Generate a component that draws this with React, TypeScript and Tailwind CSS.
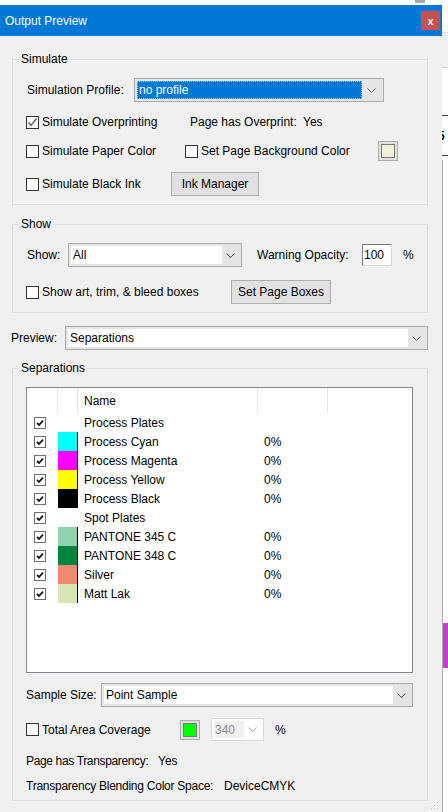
import React from "react";

const font = { fontFamily: '"Liberation Sans", Arial, sans-serif' };

const Chevron = ({ color = "#606060" }: { color?: string }) => (
  <svg width="9" height="5" viewBox="0 0 9 5">
    <path d="M0.5 0.5 L4.5 4.5 L8.5 0.5" fill="none" stroke={color} strokeWidth="1" />
  </svg>
);

const CheckBox = ({ checked }: { checked?: boolean }) => (
  <span className="flex h-[13px] w-[13px] shrink-0 items-center justify-center border border-[#333333] bg-white">
    {checked && (
      <svg width="11" height="11" viewBox="0 0 11 11">
        <path d="M1.5 5.5 L4 8.5 L9.5 1.5" fill="none" stroke="#5a5a5a" strokeWidth="1.3" />
      </svg>
    )}
  </span>
);

const ListCheck = () => (
  <span className="flex h-[12px] w-[12px] items-center justify-center border border-[#6e6e6e] bg-white">
    <svg width="10" height="10" viewBox="0 0 10 10">
      <path d="M2 4.8 L4 7 L8 2.6" fill="none" stroke="#111" strokeWidth="1.8" />
    </svg>
  </span>
);

const Labeled = ({ checked, text, width }: { checked?: boolean; text: string; width: string }) => (
  <div className={`flex items-center gap-[3px] ${width}`}>
    <CheckBox checked={checked} />
    <span>{text}</span>
  </div>
);

const Combo = ({ text, width }: { text: string; width: string }) => (
  <div className={`flex h-[24px] ${width} border border-[#acacac] bg-[#e5e5e5] p-[2px]`}>
    <div className="flex flex-1 items-center bg-white pl-[2px]">{text}</div>
    <div className="flex w-[17px] items-center justify-center">
      <Chevron />
    </div>
  </div>
);

const Button = ({ text, width }: { text: string; width: string }) => (
  <div className={`flex h-[24px] ${width} items-center justify-center border border-[#adadad] bg-[#e1e1e1]`}>
    {text}
  </div>
);

const Swatch = ({ color }: { color: string }) => (
  <div className="flex h-[20px] w-[20px] items-center justify-center border border-[#acacac] bg-[#e1e1e1]">
    <div className="h-[14px] w-[14px] border border-[#7a7a7a]" style={{ background: color }} />
  </div>
);

const rows = [
  { name: "Process Plates", color: "", pct: "" },
  { name: "Process Cyan", color: "bg-[#00ffff]", pct: "0%" },
  { name: "Process Magenta", color: "bg-[#ff00ff]", pct: "0%" },
  { name: "Process Yellow", color: "bg-[#ffff00]", pct: "0%" },
  { name: "Process Black", color: "bg-[#000000]", pct: "0%" },
  { name: "Spot Plates", color: "", pct: "" },
  { name: "PANTONE 345 C", color: "bg-[#8dd4ad]", pct: "0%" },
  { name: "PANTONE 348 C", color: "bg-[#00843f]", pct: "0%" },
  { name: "Silver", color: "bg-[#f08a6e]", pct: "0%" },
  { name: "Matt Lak", color: "bg-[#dbe5b3]", pct: "0%" },
];

export default function App() {
  return (
    <div className="flex h-[812px] w-[448px] flex-col overflow-hidden bg-white text-[12px] leading-[14px] text-black" style={font}>
      {/* strip above the dialog */}
      <div className="flex h-[5px] shrink-0">
        <div className="ml-[415px] h-[3px] w-[10px] bg-[#a8a8a8]" />
      </div>
      <div className="flex flex-1">
        {/* dialog */}
        <div className="flex w-[442px] flex-col bg-[#f0f0f0]">
          <div className="flex h-[31px] items-center justify-between bg-[#0078d7] pl-[5px] pr-[2px] text-white">
            <span>Output Preview</span>
            <div className="flex h-[19px] w-[19px] items-center justify-center bg-[#c75050] text-[11px] font-bold">x</div>
          </div>

          <fieldset className="ml-[12px] mt-[16px] w-[416px] border border-[#dcdcdc] pb-[8px]">
            <legend className="ml-[6px] px-[2px]">Simulate</legend>
            <div className="flex flex-col pl-[13px]">
              <div className="mt-[12px] flex items-center">
                <span className="w-[108px] pl-[1px]">Simulation Profile:</span>
                <div className="flex h-[24px] w-[250px] border border-[#acacac] bg-[#e5e5e5] p-[2px]">
                  <div className="flex flex-1 items-center border border-dotted border-[#9cc7ea] bg-[#0078d7] pl-[1px] text-white">
                    no profile
                  </div>
                  <div className="flex w-[19px] items-center justify-center">
                    <Chevron />
                  </div>
                </div>
              </div>
              <div className="mt-[10px] flex h-[20px] items-center">
                <Labeled checked text="Simulate Overprinting" width="w-[164px]" />
                <span className="w-[113px]">Page has Overprint:</span>
                <span>Yes</span>
              </div>
              <div className="mt-[9px] flex h-[20px] items-center">
                <Labeled text="Simulate Paper Color" width="w-[159px]" />
                <Labeled text="Set Page Background Color" width="w-[193px]" />
                <Swatch color="#f1f0d6" />
              </div>
              <div className="mt-[11px] flex items-center">
                <Labeled text="Simulate Black Ink" width="w-[145px]" />
                <Button text="Ink Manager" width="w-[88px]" />
              </div>
            </div>
          </fieldset>

          <fieldset className="ml-[12px] mt-[12px] w-[416px] border border-[#dcdcdc] pb-[8px]">
            <legend className="ml-[6px] px-[2px]">Show</legend>
            <div className="flex flex-col pl-[13px]">
              <div className="mt-[12px] flex items-center">
                <span className="w-[42px] pl-[1px]">Show:</span>
                <Combo text="All" width="w-[174px]" />
                <span className="ml-[15px] w-[105px]">Warning Opacity:</span>
                <div className="flex h-[22px] w-[30px] items-center border border-[#7a7a7a] border-b-[#d9d9d9] border-r-[#d9d9d9] bg-white pl-[1px]">100</div>
                <span className="ml-[11px]">%</span>
              </div>
              <div className="mt-[13px] flex items-center">
                <Labeled text="Show art, trim, & bleed boxes" width="w-[205px]" />
                <Button text="Set Page Boxes" width="w-[100px]" />
              </div>
            </div>
          </fieldset>

          <div className="ml-[11px] mt-[13px] flex items-center">
            <span className="w-[54px]">Preview:</span>
            <Combo text="Separations" width="w-[363px]" />
          </div>

          <fieldset className="ml-[12px] mt-[11px] w-[416px] border border-[#dcdcdc] pb-[7px]">
            <legend className="ml-[6px] px-[2px]">Separations</legend>
            <div className="flex flex-col pl-[13px]">
              <div className="mt-[12px] flex h-[286px] w-[387px] flex-col border border-[#828790] bg-white">
                <div className="flex h-[25px]">
                  <div className="w-[31px] border-r border-[#e5e5e5]" />
                  <div className="w-[20px] border-r border-[#e5e5e5]" />
                  <div className="flex w-[180px] items-center border-r border-[#e5e5e5] pl-[6px]">Name</div>
                  <div className="w-[70px] border-r border-[#e5e5e5]" />
                </div>
                {rows.map((r) => (
                  <div key={r.name} className="flex h-[19px]">
                    <div className="flex w-[31px] items-center pl-[7px]">
                      <ListCheck />
                    </div>
                    <div className="w-[20px]">
                      {r.color && <div className={`h-full w-full border-r border-black ${r.color}`} />}
                    </div>
                    <div className="flex w-[180px] items-center pl-[6px]">{r.name}</div>
                    <div className="flex w-[70px] items-center pl-[6px]">{r.pct}</div>
                  </div>
                ))}
              </div>
              <div className="mt-[10px] flex items-center">
                <span className="w-[75px]">Sample Size:</span>
                <Combo text="Point Sample" width="w-[312px]" />
              </div>
              <div className="mt-[11px] flex h-[23px] items-center">
                <Labeled text="Total Area Coverage" width="w-[154px]" />
                <Swatch color="#00ff00" />
                <div className="ml-[11px] flex h-[23px] w-[53px] border border-[#d9d9d9] bg-white p-[2px]">
                  <div className="flex flex-1 items-center bg-[#f0f0f0] pl-[1px] text-[#8a8a8a]">340</div>
                  <div className="flex w-[17px] items-center justify-center">
                    <Chevron color="#b0b0b0" />
                  </div>
                </div>
                <span className="ml-[11px]">%</span>
              </div>
              <div className="mt-[13px] flex">
                <span className="w-[132px] tracking-[-0.35px]">Page has Transparency:</span>
                <span>Yes</span>
              </div>
              <div className="mt-[11px] flex">
                <span className="w-[198px] tracking-[-0.25px]">Transparency Blending Color Space:</span>
                <span>DeviceCMYK</span>
              </div>
            </div>
          </fieldset>

          <div className="flex flex-1 items-end justify-end pb-[2px] pr-[3px]">
            <svg width="8" height="8" viewBox="0 0 8 8">
              <rect x="6" y="0" width="1" height="1" fill="#c0c0c0" />
              <rect x="3" y="3" width="1" height="1" fill="#c0c0c0" />
              <rect x="6" y="3" width="1" height="1" fill="#c0c0c0" />
              <rect x="0" y="6" width="1" height="1" fill="#c0c0c0" />
              <rect x="3" y="6" width="1" height="1" fill="#c0c0c0" />
              <rect x="6" y="6" width="1" height="1" fill="#c0c0c0" />
            </svg>
          </div>
        </div>

        {/* background window peeking at the right edge */}
        <div className="flex w-[6px] flex-col">
          <div className="h-[27px]" />
          <div className="h-[35px] border-t border-[#e0e0e0] bg-[#f0f0f0]" />
          <div className="h-[48px] border-t border-[#d0d0d0]" />
          <div className="h-[1px] bg-[#3c3c3c]" />
          <div className="flex h-[39px] items-center overflow-hidden">
            <span className="-ml-[4px] font-bold">5</span>
          </div>
          <div className="h-[1px] bg-[#3c3c3c]" />
          <div className="h-[4px]" />
          <div className="flex flex-1 flex-col border-l border-[#b0b0b0]">
            <div className="mt-[463px] h-[45px] bg-[#c040c8]" />
          </div>
        </div>
      </div>
    </div>
  );
}
